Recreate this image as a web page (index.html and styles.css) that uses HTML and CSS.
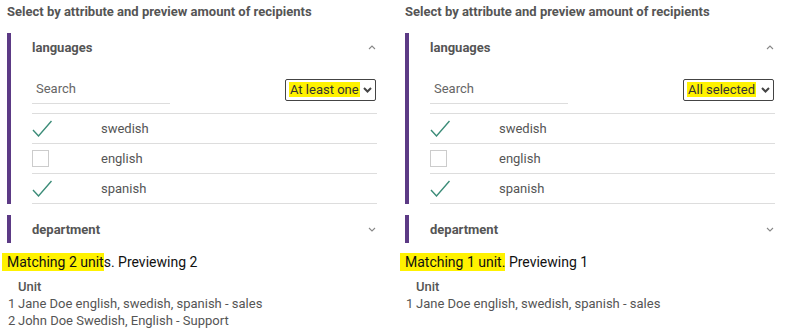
FILE: index.html
```html
<!DOCTYPE html>
<html lang="en">
<head>
  <meta charset="UTF-8">
  <title>Recipient preview</title>
  <link rel="stylesheet" href="styles.css">
</head>
<body>
  <div class="columns">

    <!-- Any match -->
    <div class="panel">
      <div class="title">Select by attribute and preview amount of recipients</div>

      <div class="section">
        <div class="section-head">
          <span>languages</span>
          <svg class="chev" width="8" height="5" viewBox="0 0 8 5"><polyline points="1,4 4,1 7,4" /></svg>
        </div>
        <div class="section-body">
          <div class="filter-row">
            <div class="search">Search</div>
            <div class="select"><mark>At least one</mark>
              <svg width="9" height="6" viewBox="0 0 9 6"><polyline points="1,1 4.5,4.5 8,1" /></svg>
            </div>
          </div>
          <ul class="options">
            <li>
              <span class="tick"><svg width="20" height="17" viewBox="0 0 20 17"><polyline points="1,10 6.5,16 19.5,1" /></svg></span>
              swedish
            </li>
            <li>
              <span class="tick"><span class="box"></span></span>
              english
            </li>
            <li>
              <span class="tick"><svg width="20" height="17" viewBox="0 0 20 17"><polyline points="1,10 6.5,16 19.5,1" /></svg></span>
              spanish
            </li>
          </ul>
        </div>
      </div>

      <div class="section">
        <div class="section-head">
          <span>department</span>
          <svg class="chev" width="8" height="5" viewBox="0 0 8 5"><polyline points="1,1 4,4 7,1" /></svg>
        </div>
      </div>

      <div class="summary"><mark>Matching 2 unit</mark>s. Previewing 2</div>
      <div class="units">
        <span></span><span class="unit-head">Unit</span>
        <span>1</span><span>Jane Doe english, swedish, spanish - sales</span>
        <span>2</span><span>John Doe Swedish, English - Support</span>
      </div>
    </div>

    <!-- All match -->
    <div class="panel">
      <div class="title">Select by attribute and preview amount of recipients</div>

      <div class="section">
        <div class="section-head">
          <span>languages</span>
          <svg class="chev" width="8" height="5" viewBox="0 0 8 5"><polyline points="1,4 4,1 7,4" /></svg>
        </div>
        <div class="section-body">
          <div class="filter-row">
            <div class="search">Search</div>
            <div class="select"><mark>All selected</mark>
              <svg width="9" height="6" viewBox="0 0 9 6"><polyline points="1,1 4.5,4.5 8,1" /></svg>
            </div>
          </div>
          <ul class="options">
            <li>
              <span class="tick"><svg width="20" height="17" viewBox="0 0 20 17"><polyline points="1,10 6.5,16 19.5,1" /></svg></span>
              swedish
            </li>
            <li>
              <span class="tick"><span class="box"></span></span>
              english
            </li>
            <li>
              <span class="tick"><svg width="20" height="17" viewBox="0 0 20 17"><polyline points="1,10 6.5,16 19.5,1" /></svg></span>
              spanish
            </li>
          </ul>
        </div>
      </div>

      <div class="section">
        <div class="section-head">
          <span>department</span>
          <svg class="chev" width="8" height="5" viewBox="0 0 8 5"><polyline points="1,1 4,4 7,1" /></svg>
        </div>
      </div>

      <div class="summary"><mark>Matching 1 unit.</mark> Previewing 1</div>
      <div class="units">
        <span></span><span class="unit-head">Unit</span>
        <span>1</span><span>Jane Doe english, swedish, spanish - sales</span>
      </div>
    </div>

  </div>
</body>
</html>
```

FILE: styles.css
```css
body {
  margin: 0;
  background: #fff;
  font-family: Roboto, 'Liberation Sans', sans-serif;
  color: #555;
}

.columns {
  display: flex;
  gap: 28px;
  padding: 2px 0 0 7px;
}

.panel {
  width: 370px;
  flex: none;
}

/* Title */
.title {
  font-size: 13px;
  font-weight: 700;
  line-height: 20px;
  color: #555;
  white-space: nowrap;
}

/* Collapsible sections */
.section {
  border-left: 4px solid #5c3a85;
  margin-top: 11px;
}

.section:first-of-type {
  margin-top: 9px;
}

.section-head {
  display: flex;
  justify-content: space-between;
  align-items: center;
  height: 28px;
  padding: 0 1px 0 21px;
  font-size: 13px;
  font-weight: 700;
  color: #555;
}

.chev polyline {
  fill: none;
  stroke: #888;
  stroke-width: 1.1;
}

.section-body {
  padding-left: 21px;
}

/* Search + mode selector */
.filter-row {
  display: flex;
  justify-content: space-between;
  align-items: center;
  margin-top: 14px;
}

.search {
  width: 134px;
  height: 28px;
  line-height: 28px;
  padding-left: 4px;
  border-bottom: 1px solid #ddd;
  font-size: 13px;
  color: #666;
}

.select {
  display: flex;
  align-items: center;
  justify-content: space-between;
  box-sizing: border-box;
  width: 91px;
  height: 22px;
  margin-right: 1px;
  padding: 0 3px 0 3px;
  border: 1px solid #444;
  border-radius: 2px;
  font-size: 13px;
  color: #333;
}

.select svg polyline {
  fill: none;
  stroke: #444;
  stroke-width: 2;
}

mark {
  background: #fff200;
  color: inherit;
  padding: 0 1px;
}

/* Option list */
.options {
  list-style: none;
  margin: 9px 0 0;
  padding: 0;
  border-top: 1px solid #ddd;
}

.options li {
  display: flex;
  align-items: center;
  height: 29px;
  border-bottom: 1px solid #ddd;
  font-size: 13px;
  color: #555;
}

.tick {
  display: flex;
  align-items: center;
  width: 69px;
  flex: none;
}

.tick polyline {
  fill: none;
  stroke: #3c8c78;
  stroke-width: 1.4;
}

.box {
  width: 15px;
  height: 15px;
  border: 1px solid #ccc;
}

/* Preview */
.summary {
  margin-top: 9px;
  font-size: 14px;
  line-height: 20px;
  color: #111;
}

.summary mark {
  margin-left: -5px;
  padding: 1px 0 1px 5px;
}

.units {
  display: grid;
  grid-template-columns: 11px auto;
  margin-top: 6px;
  font-size: 13px;
  line-height: 17px;
  color: #555;
  white-space: nowrap;
}

.units span:nth-child(odd) {
  padding-left: 1px;
}

.unit-head {
  font-weight: 500;
}
```
